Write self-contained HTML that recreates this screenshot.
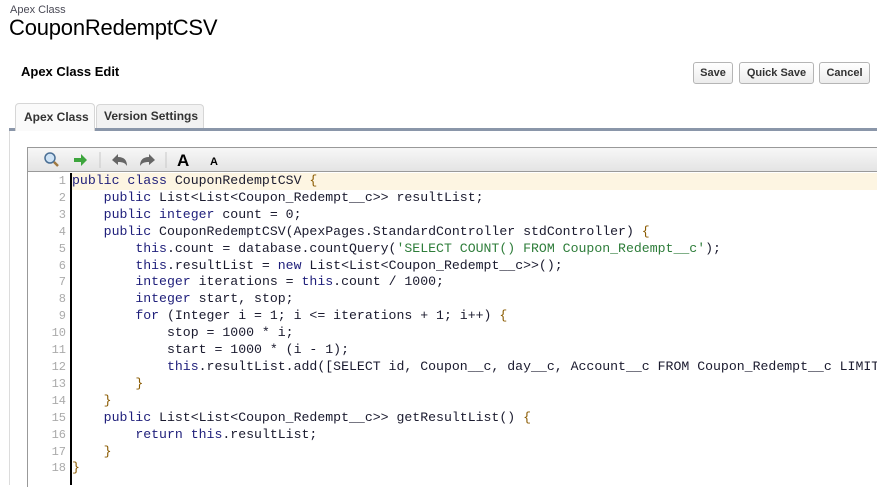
<!DOCTYPE html>
<html><head><meta charset="utf-8"><style>
*{margin:0;padding:0;box-sizing:border-box}
body{width:877px;height:485px;overflow:hidden;background:#fff;font-family:"Liberation Sans",Arial,sans-serif;position:relative;color:#000}
.a{position:absolute}
.btn{position:absolute;top:62px;height:22px;border:1px solid #b5b5b5;border-radius:3px;background:linear-gradient(#fff,#ececec);font-size:11px;font-weight:bold;color:#333;text-align:center;line-height:20px}
.tab{position:absolute;border:1px solid #d6d6d6;border-bottom:none;border-radius:4px 4px 0 0;font-size:12px;font-weight:bold;color:#333}
.code{position:absolute;left:72px;top:173px;font-family:"Liberation Mono","Courier New",monospace;font-size:13.2px;line-height:16.9px;white-space:pre;color:#1a1a2e;width:805px;overflow:hidden}
.nums{position:absolute;left:28px;top:173px;width:38px;text-align:right;font-family:"Liberation Mono",monospace;font-size:12px;line-height:16.9px;color:#aaa;white-space:pre}
.k{color:#1e1e7a}.s{color:#2e7d3a}.b{color:#8a5a00}
</style></head><body>
<div class="a" style="left:10px;top:4px;font-size:11px;color:#4a4a56">Apex Class</div>
<div class="a" style="left:9px;top:15px;font-size:22px;color:#000;letter-spacing:-0.2px">CouponRedemptCSV</div>
<div class="a" style="left:21px;top:64px;font-size:13px;font-weight:bold">Apex Class Edit</div>
<div class="btn" style="left:693px;width:40px">Save</div>
<div class="btn" style="left:739px;width:75px">Quick Save</div>
<div class="btn" style="left:819px;width:51px">Cancel</div>
<div class="a" style="left:9px;top:128px;width:868px;height:3px;background:#8a96a9"></div>
<div class="a" style="left:9px;top:131px;width:1px;height:354px;background:#dcdcdc"></div>
<div class="tab" style="left:96px;top:104px;width:108px;height:24px;background:#f2f2f2;line-height:22px;padding-left:7px">Version Settings</div>
<div class="tab" style="left:15px;top:103px;width:80px;height:28px;background:#fafafa;line-height:26px;padding-left:8px;font-weight:normal;color:#222;font-size:12px"><b style="font-weight:bold;color:#333">Apex Class</b></div>
<div class="a" style="left:27px;top:147px;width:850px;height:340px;border:1px solid #999;border-right:none;border-bottom:none"></div>
<div class="a" style="left:28px;top:148px;width:849px;height:24px;background:linear-gradient(#f7f7f7,#e4e4e4);border-bottom:1px solid #9a9a9a"></div>
<svg class="a" style="left:40px;top:150px" width="200" height="20">
<circle cx="10" cy="8" r="5" fill="#cfe3f5" stroke="#4a6f95" stroke-width="1.5"/><line x1="14" y1="12" x2="18" y2="16" stroke="#a07840" stroke-width="2.5"/>
<path d="M34 8h7v-4l6 6-6 6v-4h-7z" fill="#3da53d"/>
<line x1="60" y1="2" x2="60" y2="18" stroke="#c8c8c8"/>
<path d="M72 10l6-6v3c6 0 9 3 9 9-2-3-4-4-9-4v3z" fill="#666"/>
<path d="M115 10l-6-6v3c-6 0-9 3-9 9 2-3 4-4 9-4v3z" fill="#666"/>
<line x1="126" y1="2" x2="126" y2="18" stroke="#c8c8c8"/>
<text x="137" y="16" font-family="Liberation Sans" font-weight="bold" font-size="17">A</text>
<text x="170" y="15" font-family="Liberation Sans" font-weight="bold" font-size="11">A</text>
</svg>
<div class="a" style="left:71px;top:173px;width:806px;height:17px;background:#fdf5e2"></div>
<div class="a" style="left:70px;top:173px;width:2px;height:312px;background:#000"></div>
<div class="nums">1
2
3
4
5
6
7
8
9
10
11
12
13
14
15
16
17
18</div>
<div class="code"><span class="k">public class</span> CouponRedemptCSV <span class="b">{</span>
    <span class="k">public</span> List&lt;List&lt;Coupon_Redempt__c&gt;&gt; resultList;
    <span class="k">public integer</span> count = 0;
    <span class="k">public</span> CouponRedemptCSV(ApexPages.StandardController stdController) <span class="b">{</span>
        <span class="k">this</span>.count = database.countQuery(<span class="s">'SELECT COUNT() FROM Coupon_Redempt__c'</span>);
        <span class="k">this</span>.resultList = <span class="k">new</span> List&lt;List&lt;Coupon_Redempt__c&gt;&gt;();
        <span class="k">integer</span> iterations = <span class="k">this</span>.count / 1000;
        <span class="k">integer</span> start, stop;
        <span class="k">for</span> (Integer i = 1; i &lt;= iterations + 1; i++) <span class="b">{</span>
            stop = 1000 * i;
            start = 1000 * (i - 1);
            <span class="k">this</span>.resultList.add([SELECT id, Coupon__c, day__c, Account__c FROM Coupon_Redempt__c LIMIT
        <span class="b">}</span>
    <span class="b">}</span>
    <span class="k">public</span> List&lt;List&lt;Coupon_Redempt__c&gt;&gt; getResultList() <span class="b">{</span>
        <span class="k">return this</span>.resultList;
    <span class="b">}</span>
<span class="b">}</span></div>
</body></html>
